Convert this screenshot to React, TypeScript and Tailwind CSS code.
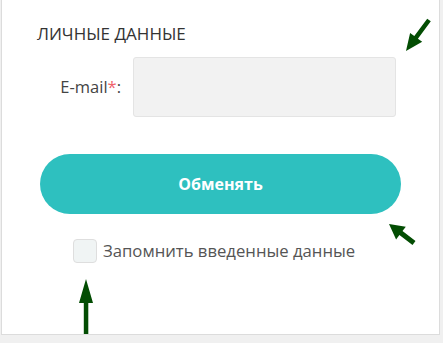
type Pt = [number, number];

function arrowPoints(tail: Pt, tip: Pt, shaft = 4.5, headLen = 17, headHalf = 7.5) {
  const dx = tip[0] - tail[0];
  const dy = tip[1] - tail[1];
  const len = Math.hypot(dx, dy);
  const ux = dx / len;
  const uy = dy / len;
  const nx = -uy;
  const ny = ux;
  const bx = tip[0] - ux * headLen;
  const by = tip[1] - uy * headLen;
  const s = shaft / 2;
  const pts: Pt[] = [
    [tail[0] + nx * s, tail[1] + ny * s],
    [bx + nx * s, by + ny * s],
    [bx + nx * headHalf, by + ny * headHalf],
    tip,
    [bx - nx * headHalf, by - ny * headHalf],
    [bx - nx * s, by - ny * s],
    [tail[0] - nx * s, tail[1] - ny * s],
  ];
  return pts.map((p) => `${p[0].toFixed(1)},${p[1].toFixed(1)}`).join(" ");
}

function Arrows() {
  return (
    <svg
      className="absolute inset-0 pointer-events-none"
      width="443"
      height="343"
      viewBox="0 0 443 343"
    >
      <polygon points={arrowPoints([429, 20], [406, 51])} fill="#034d03" />
      <polygon points={arrowPoints([414, 243], [389, 224], 5, 15, 8)} fill="#034d03" />
      <polygon points={arrowPoints([86, 334], [86, 279], 4.5, 24, 7)} fill="#034d03" />
    </svg>
  );
}

export default function App() {
  return (
    <div
      className="relative w-[443px] h-[343px] bg-[#f0f0f0] overflow-hidden"
      style={{ fontFamily: '"Open Sans", "Noto Sans", sans-serif' }}
    >
      {/* card */}
      <div className="ml-px w-[439px] h-[335px] bg-white border-x border-b border-[#dcdcdc] flex flex-col">
        <h3 className="mt-[22px] ml-[35px] text-[17px] leading-6 text-[#333] font-normal">
          ЛИЧНЫЕ ДАННЫЕ
        </h3>

        <div className="mt-[11px] flex items-center">
          <label className="w-[131px] pr-[12px] text-right text-[16.5px] text-[#444]">
            E-mail<span className="text-[#f0626a]">*</span>:
          </label>
          <input
            className="w-[263px] h-[60px] bg-[#f2f2f2] border border-[#e4e4e4] rounded-[3px] outline-none px-3"
            type="email"
          />
        </div>

        <button className="mt-[37px] ml-[38px] w-[361px] h-[60px] rounded-full bg-[#2ec0bf] text-white text-[16px] font-bold">
          Обменять
        </button>

        <label className="mt-[24px] ml-[71px] flex items-center gap-[6px]">
          <span className="w-[24px] h-[24px] rounded-[4px] bg-[#f0f4f4] border border-[#dedede]" />
          <span className="text-[16.7px] text-[#555]">Запомнить введенные данные</span>
        </label>
      </div>

      <Arrows />
    </div>
  );
}
